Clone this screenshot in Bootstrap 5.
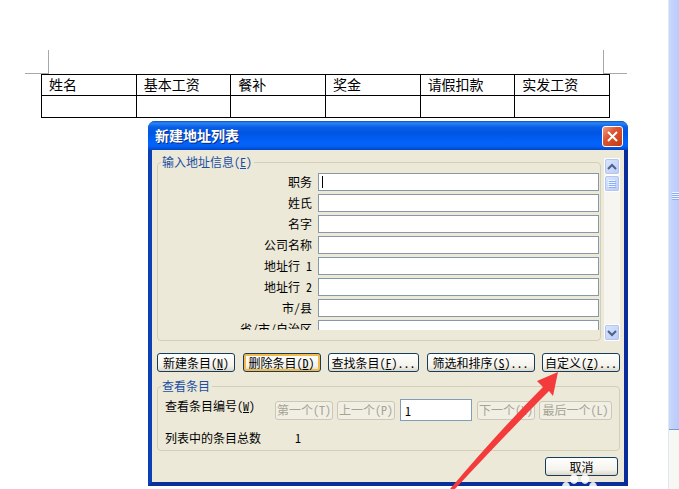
<!DOCTYPE html>
<html lang="zh-CN">
<head>
<meta charset="utf-8">
<meta name="viewport" content="width=device-width, initial-scale=1">
<title>新建地址列表</title>
<link href="https://cdn.jsdelivr.net/npm/bootstrap@5.3.0/dist/css/bootstrap.min.css" rel="stylesheet">
<style>
  body { font-family: "Noto Sans CJK SC", sans-serif; font-feature-settings: "hwid"; font-size: 12px; line-height: 14px; color: #000; background: #fff; }
  button, input { font-feature-settings: inherit; }
  .doc-page { padding: 50px 58px 0 41px; }
  .crop-marks { margin: 0 -17px 0 -16px; height: 24px; }
  .crop-mark { width: 24px; border-bottom: 1px solid #a8a8a8; }
  .crop-start { border-right: 1px solid #a8a8a8; }
  .crop-end { border-left: 1px solid #a8a8a8; }
  .pay-table { table-layout: fixed; border-collapse: collapse; font-size: 14px; line-height: 18px; }
  .pay-table th, .pay-table td { border: 1px solid #000; height: 21px; padding: 0 7px 2px; font-weight: 400; }
  .pay-table td { height: 22px; }
  .side-bar { width: 11px; background: #f7f7f3; border-left: 1px solid #dfe9f2; }
  .side-thumb { height: 430px; background: linear-gradient(90deg, #c9d9fb, #c2d1fb 40%, #bccafa); border-bottom: 1px solid #7e97cf; padding: 192px 0 0 3px; }
  .side-grip { height: 8px; background: repeating-linear-gradient(#eef4fe 0 1px, #8cb0f8 1px 2px); }

  .xp-window { top: 121px; left: 148px; right: 51px; background: #ece9d8; border: solid #0a3fb5; border-width: 0 4px 4px; border-right-color: #0a2c9a; border-bottom-color: #0a2f98; border-radius: 7px 7px 0 0; }
  .xp-title { height: 29px; margin: 0 -4px; padding: 2px 5px 0 7px; color: #fff; text-shadow: 1px 1px 0 #0a2a80; border-radius: 7px 7px 0 0; background: linear-gradient(#0a50c8 0, #2b86f4 2px, #0a5fe6 6px, #0055e2 12px, #0262fb 21px, #0461f4 25px, #0144c6 29px); }
  .xp-title h1 { font-size: 14px; line-height: 18px; font-weight: 700; padding-bottom: 4px; }
  .xp-close { width: 21px; height: 21px; border: 1px solid #fff; border-radius: 3px; background: linear-gradient(135deg, #f0a088, #dc5431 40%, #c43c15); }
  .xp-body { padding: 5px 4px 6px 5px; }
  .xp-group { border: 1px solid #d2cfb6; border-radius: 4px; }
  .xp-group > legend { float: none; width: auto; margin: 0 0 0 3px; padding: 0 2px 0 1px; font-size: 12px; line-height: 14px; color: #1c4fa3; }
  .field-list { height: 157px; margin: 4px 1px 10px 2px; overflow: hidden; gap: 3px; }
  .field-row { gap: 6px; flex: none; }
  .field-row label { width: 152px; line-height: 18px; text-align: right; white-space: nowrap; }
  .xp-input { height: 18px; min-width: 0; border: 1px solid #8799a8; border-radius: 0; background-color: #fff; padding: 0 4px; font-size: 12px; outline: 0; }
  .has-caret { background-image: linear-gradient(#000, #000); background-size: 1px 12px; background-position: 3px 2px; background-repeat: no-repeat; }
  .xp-scroll { width: 16px; margin: 3px 0 0 3px; background: #f6f5f0; }
  .scroll-btn { height: 17px; border: 1px solid #fff; outline: 1px solid #b5c6ee; outline-offset: -2px; border-radius: 3px; background: linear-gradient(135deg, #dce6fe, #b9cbf8); }
  .xp-btn { height: 19px; border: 1px solid #163d5c; border-radius: 3px; background: linear-gradient(#fff, #f4f3ec 70%, #dcd7c9); font-size: 12px; line-height: 14px; white-space: nowrap; color: #000; }
  .xp-btn:disabled { color: #a5a393; border-color: #cbc8b8; background: #f1efe4; }
  .xp-btn.is-active { box-shadow: inset 0 0 0 2px #f3b94a; }
  .w-short { width: 58px; } .w-last { width: 73px; } .w-cancel { width: 73px; }
  .w-new { width: 78px; } .w-find { width: 91px; } .w-sort { width: 108px; }
  .btn-line { margin-top: 12px; margin-bottom: 7px; }
  .nav-line { padding: 6px 5px 0 7px; }
  .nav-line > label { width: 110px; line-height: 14px; }
  .num-box { width: 72px; height: 22px; border-color: #7f9db9; margin: 0 5px 0 5px; }
  .total-line { padding: 9px 7px 4px; line-height: 16px; gap: 34px; margin-bottom: 0; }
  .cancel-line { padding: 6px 2px 0 0; }
  .pointer-arrow { left: 298px; top: 249px; pointer-events: none; }
  .paw-mark { left: 410px; top: 351px; pointer-events: none; }
</style>
<script src="https://cdn.jsdelivr.net/npm/bootstrap@5.3.0/dist/js/bootstrap.bundle.min.js"></script>
</head>
<body class="overflow-hidden">
<div class="d-flex min-vh-100 position-relative">
  <main class="doc-page flex-grow-1">
    <div class="crop-marks d-flex justify-content-between">
      <div class="crop-mark crop-start"></div>
      <div class="crop-mark crop-end"></div>
    </div>
    <table class="pay-table w-100">
      <thead><tr><th>姓名</th><th>基本工资</th><th>餐补</th><th>奖金</th><th>请假扣款</th><th>实发工资</th></tr></thead>
      <tbody><tr><td></td><td></td><td></td><td></td><td></td><td></td></tr></tbody>
    </table>
  </main>
  <aside class="side-bar flex-shrink-0"><div class="side-thumb"><div class="side-grip"></div></div></aside>

  <section class="xp-window position-absolute" role="dialog" aria-labelledby="dlgTitle">
    <header class="xp-title d-flex align-items-center justify-content-between">
      <h1 class="m-0" id="dlgTitle">新建地址列表</h1>
      <button type="button" class="xp-close p-0 d-flex align-items-center justify-content-center" aria-label="关闭">
        <svg width="13" height="13" viewBox="0 0 13 13"><path d="M2 2l9 9M11 2l-9 9" stroke="#fff" stroke-width="2"/></svg>
      </button>
    </header>
    <form class="xp-body">
      <div class="d-flex">
        <fieldset class="xp-group flex-grow-1">
          <legend>输入地址信息(<u>E</u>)</legend>
          <div class="field-list d-flex flex-column">
            <div class="field-row d-flex"><label for="f1">职务</label><input id="f1" class="xp-input has-caret flex-grow-1"></div>
            <div class="field-row d-flex"><label for="f2">姓氏</label><input id="f2" class="xp-input flex-grow-1"></div>
            <div class="field-row d-flex"><label for="f3">名字</label><input id="f3" class="xp-input flex-grow-1"></div>
            <div class="field-row d-flex"><label for="f4">公司名称</label><input id="f4" class="xp-input flex-grow-1"></div>
            <div class="field-row d-flex"><label for="f5">地址行 1</label><input id="f5" class="xp-input flex-grow-1"></div>
            <div class="field-row d-flex"><label for="f6">地址行 2</label><input id="f6" class="xp-input flex-grow-1"></div>
            <div class="field-row d-flex"><label for="f7">市/县</label><input id="f7" class="xp-input flex-grow-1"></div>
            <div class="field-row d-flex"><label for="f8">省/市/自治区</label><input id="f8" class="xp-input flex-grow-1"></div>
          </div>
        </fieldset>
        <div class="xp-scroll d-flex flex-column">
          <button type="button" class="scroll-btn p-0 d-flex align-items-center justify-content-center" aria-label="向上滚动"><svg width="10" height="8" viewBox="0 0 10 8"><path d="M1 6l4-4 4 4" fill="none" stroke="#4d6185" stroke-width="2"/></svg></button>
          <button type="button" class="scroll-btn p-0 d-flex align-items-center justify-content-center" aria-label="滚动滑块"><svg width="8" height="8" viewBox="0 0 8 8"><path d="M0 .5h7M0 2.500h7M0 4.500h7M0 6.500h7" stroke="#eef4fe"/><path d="M1 1.500h7M1 3.500h7M1 5.500h7M1 7.500h7" stroke="#8cb0f8"/></svg></button>
          <button type="button" class="scroll-btn p-0 mt-auto d-flex align-items-center justify-content-center" aria-label="向下滚动"><svg width="10" height="8" viewBox="0 0 10 8"><path d="M1 2l4 4 4-4" fill="none" stroke="#4d6185" stroke-width="2"/></svg></button>
        </div>
      </div>

      <div class="btn-line d-flex justify-content-between">
        <button type="button" class="xp-btn w-new p-0">新建条目(<u>N</u>)</button>
        <button type="button" class="xp-btn w-new is-active p-0">删除条目(<u>D</u>)</button>
        <button type="button" class="xp-btn w-find p-0">查找条目(<u>F</u>)...</button>
        <button type="button" class="xp-btn w-sort p-0">筛选和排序(<u>S</u>)...</button>
        <button type="button" class="xp-btn w-new p-0">自定义(<u>Z</u>)...</button>
      </div>

      <fieldset class="xp-group">
        <legend>查看条目</legend>
        <div class="nav-line d-flex align-items-center">
          <label for="num" class="align-self-start">查看条目编号(<u>W</u>)</label>
          <button type="button" class="xp-btn w-short p-0" disabled>第一个(T)</button>
          <button type="button" class="xp-btn w-short p-0 ms-1" disabled>上一个(P)</button>
          <input id="num" class="xp-input num-box" value="1">
          <button type="button" class="xp-btn w-short p-0" disabled>下一个(X)</button>
          <button type="button" class="xp-btn w-last p-0 ms-1" disabled>最后一个(L)</button>
        </div>
        <p class="total-line d-flex"><span>列表中的条目总数</span><span>1</span></p>
      </fieldset>

      <div class="cancel-line d-flex justify-content-end">
        <button type="button" class="xp-btn w-cancel p-0">取消</button>
      </div>
    </form>
    <svg class="pointer-arrow position-absolute" width="112" height="119" viewBox="450 370 112 119" aria-hidden="true"><path d="M558 372L537 381L543 387Q500 430 450 489H455Q510 430 549 391L553 396Z" fill="#f43b3b"/></svg>
    <svg class="paw-mark position-absolute" width="36" height="17" viewBox="562 472 36 17" aria-hidden="true"><g fill="#fff" fill-opacity=".88"><ellipse cx="574" cy="479" rx="4" ry="5"/><ellipse cx="585" cy="479" rx="4" ry="5"/><ellipse cx="566" cy="487" rx="4" ry="5"/><ellipse cx="593" cy="487" rx="4" ry="5"/><ellipse cx="579" cy="492" rx="8" ry="6"/></g></svg>
  </section>
</div>
</body>
</html>
